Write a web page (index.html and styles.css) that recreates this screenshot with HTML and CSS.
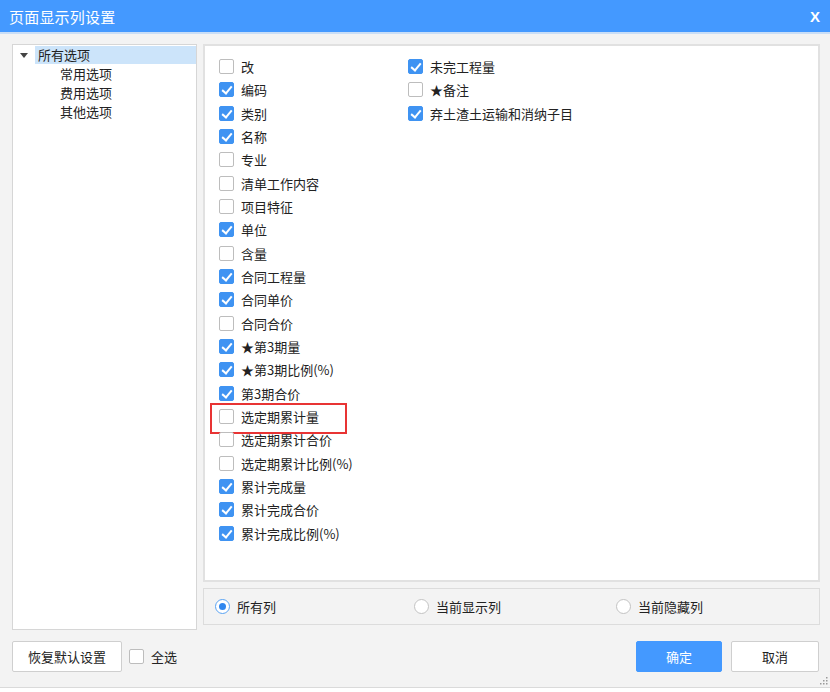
FILE: index.html
```html
<!DOCTYPE html>
<html lang="zh">
<head>
<meta charset="utf-8">
<link rel="stylesheet" href="styles.css">
</head>
<body>
<div class="dialog">
  <div class="titlebar">
    <span class="title">页面显示列设置</span>
    <span class="close">X</span>
  </div>
  <div class="main">
    <div class="tree">
      <div class="tree-root">
        <span class="tri"></span>
        <span class="root-label">所有选项</span>
      </div>
      <div class="tree-child">常用选项</div>
      <div class="tree-child">费用选项</div>
      <div class="tree-child">其他选项</div>
    </div>
    <div class="right">
      <div class="cols">
        <div class="col col1">
          <div class="item"><span class="cb"></span>改</div>
          <div class="item"><span class="cb on"></span>编码</div>
          <div class="item"><span class="cb on"></span>类别</div>
          <div class="item"><span class="cb on"></span>名称</div>
          <div class="item"><span class="cb"></span>专业</div>
          <div class="item"><span class="cb"></span>清单工作内容</div>
          <div class="item"><span class="cb"></span>项目特征</div>
          <div class="item"><span class="cb on"></span>单位</div>
          <div class="item"><span class="cb"></span>含量</div>
          <div class="item"><span class="cb on"></span>合同工程量</div>
          <div class="item"><span class="cb on"></span>合同单价</div>
          <div class="item"><span class="cb"></span>合同合价</div>
          <div class="item"><span class="cb on"></span>★第3期量</div>
          <div class="item"><span class="cb on"></span>★第3期比例(%)</div>
          <div class="item"><span class="cb on"></span>第3期合价</div>
          <div class="item marked"><span class="cb"></span>选定期累计量</div>
          <div class="item"><span class="cb"></span>选定期累计合价</div>
          <div class="item"><span class="cb"></span>选定期累计比例(%)</div>
          <div class="item"><span class="cb on"></span>累计完成量</div>
          <div class="item"><span class="cb on"></span>累计完成合价</div>
          <div class="item"><span class="cb on"></span>累计完成比例(%)</div>
        </div>
        <div class="col col2">
          <div class="item"><span class="cb on"></span>未完工程量</div>
          <div class="item"><span class="cb"></span>★备注</div>
          <div class="item"><span class="cb on"></span>弃土渣土运输和消纳子目</div>
        </div>
      </div>
      <div class="radios">
        <div class="radio r1"><span class="rb on"></span>所有列</div>
        <div class="radio r2"><span class="rb"></span>当前显示列</div>
        <div class="radio r3"><span class="rb"></span>当前隐藏列</div>
      </div>
    </div>
  </div>
  <div class="footer">
    <div class="btn reset">恢复默认设置</div>
    <div class="selall"><span class="cb"></span>全选</div>
    <div class="spacer"></div>
    <div class="btn ok">确定</div>
    <div class="btn cancel">取消</div>
  </div>
  <svg class="grip" width="8" height="8" viewBox="0 0 8 8">
    <rect x="6" y="0" width="1.5" height="1.5" fill="#9a9a9a"/>
    <rect x="3" y="3" width="1.5" height="1.5" fill="#9a9a9a"/>
    <rect x="6" y="3" width="1.5" height="1.5" fill="#9a9a9a"/>
    <rect x="0" y="6" width="1.5" height="1.5" fill="#9a9a9a"/>
    <rect x="3" y="6" width="1.5" height="1.5" fill="#9a9a9a"/>
    <rect x="6" y="6" width="1.5" height="1.5" fill="#9a9a9a"/>
  </svg>
</div>
<div class="under"></div>
</body>
</html>
```
FILE: styles.css
```css
* { box-sizing: border-box; }
html, body { margin: 0; padding: 0; }
body {
  width: 830px;
  height: 692px;
  overflow: hidden;
  background: #ffffff;
  font-family: "Noto Sans CJK SC", "Noto Sans", sans-serif;
  font-size: 13px;
  color: #222;
}
.dialog {
  position: relative;
  width: 830px;
  height: 688px;
  background: #f3f3f3;
  border-bottom: 1px solid #dadada;
}
.titlebar {
  height: 34px;
  background: #4499ff;
  border-bottom: 2px solid #c9def7;
  display: flex;
  align-items: center;
  justify-content: space-between;
  padding: 0 8px 0 9px;
  color: #fff;
}
.title { font-size: 15px; letter-spacing: 0.2px; }
.close {
  font-family: "Liberation Sans", sans-serif;
  font-weight: bold;
  font-size: 15px;
  margin-right: 2px;
}
.main {
  display: flex;
  gap: 6px;
  padding: 10px 10px 0 12px;
}
.tree {
  width: 185px;
  height: 586px;
  background: #fff;
  border: 1px solid #d6d6d6;
  padding-top: 1px;
}
.tree-root {
  display: flex;
  align-items: center;
  height: 18px;
}
.tri {
  width: 0; height: 0;
  margin-left: 7px;
  border-left: 4px solid transparent;
  border-right: 4px solid transparent;
  border-top: 5px solid #444;
}
.root-label {
  margin-left: 7px;
  flex: 1;
  height: 18px;
  line-height: 18px;
  background: #cce4fa;
  padding-left: 3px;
}
.tree-child {
  height: 19px;
  line-height: 19px;
  padding-left: 47px;
}
.right {
  width: 617px;
  display: flex;
  flex-direction: column;
}
.cols {
  height: 538px;
  background: #fff;
  border: 2px solid #e1e1e1;
  display: flex;
  padding: 9px 0 0 14px;
}
.col { display: flex; flex-direction: column; }
.col1 { width: 189px; }
.item {
  height: 23.33px;
  display: flex;
  align-items: center;
  white-space: nowrap;
  position: relative;
}
.cb {
  width: 15px;
  height: 15px;
  border: 1px solid #bdbdbd;
  border-radius: 2px;
  background: #fff;
  margin-right: 7px;
  flex: none;
  position: relative;
}
.cb.on {
  background: #3f93f2;
  border-color: #3f93f2;
}
.cb.on::after {
  content: "";
  position: absolute;
  left: 4px;
  top: 1px;
  width: 4px;
  height: 8px;
  border-right: 2px solid #fff;
  border-bottom: 2px solid #fff;
  transform: rotate(40deg);
}
.item.marked::before {
  content: "";
  position: absolute;
  left: -9px;
  top: -2px;
  width: 133px;
  height: 27px;
  border: 2px solid #e83434;
}
.radios {
  margin-top: 6px;
  height: 37px;
  border: 1px solid #dcdcdc;
  display: flex;
  align-items: center;
  padding-left: 11px;
}
.radio {
  display: flex;
  align-items: center;
}
.r1 { width: 199px; }
.r2 { width: 202px; }
.rb {
  width: 15px;
  height: 15px;
  border-radius: 50%;
  border: 1px solid #c3c3c3;
  background: #fff;
  margin-right: 7px;
  position: relative;
}
.rb.on { border-color: #5aa3f3; }
.rb.on::after {
  content: "";
  position: absolute;
  left: 3px; top: 3px;
  width: 7px; height: 7px;
  border-radius: 50%;
  background: #2f86ee;
}
.footer {
  display: flex;
  align-items: center;
  padding: 11px 11px 0 12px;
}
.btn {
  height: 31px;
  line-height: 29px;
  text-align: center;
  border: 1px solid #cfcfcf;
  border-radius: 2px;
  background: #fff;
}
.reset { width: 110px; }
.selall {
  display: flex;
  align-items: center;
  margin-left: 7px;
}
.selall .cb { margin-right: 7px; }
.spacer { flex: 1; }
.ok {
  width: 86px;
  background: #4499ff;
  border-color: #4499ff;
  color: #fff;
}
.cancel { width: 88px; margin-left: 9px; }
.grip {
  position: absolute;
  right: 2px;
  bottom: 2px;
}
.under { height: 4px; background: #fff; }
```
